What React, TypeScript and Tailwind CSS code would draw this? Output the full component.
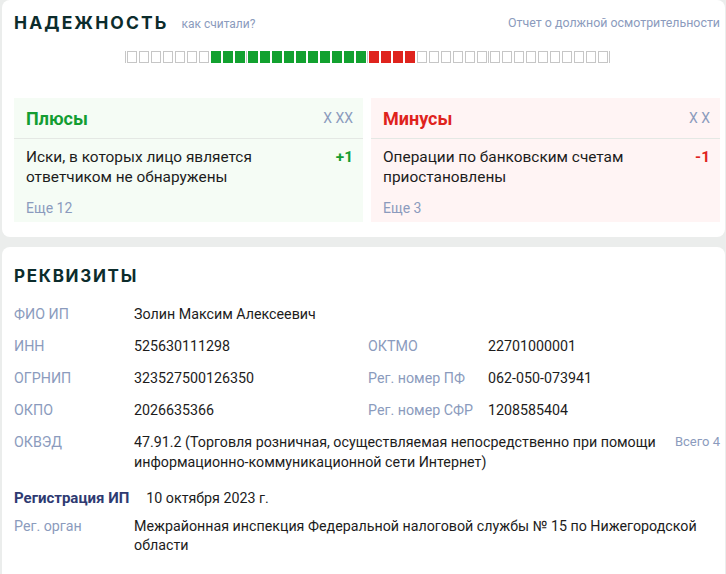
import React from 'react';

type Cell = 'empty' | 'green' | 'red';

const groups: Cell[][] = [
  [...Array(7).fill('empty'), ...Array(3).fill('green')],
  Array(10).fill('green'),
  [...Array(4).fill('red'), ...Array(6).fill('empty')],
  Array(10).fill('empty'),
];

const Divider = () => <div className="w-px h-[12px] bg-[#c6c6c6]" />;

const Square = ({ kind }: { kind: Cell }) => {
  if (kind === 'green') return <div className="w-[10px] h-[12px] bg-[#12a12f]" />;
  if (kind === 'red') return <div className="w-[10px] h-[12px] bg-[#df231d]" />;
  return <div className="w-[10px] h-[12px] border border-[#c6c6c6] box-border" />;
};

const Scale = () => (
  <div className="flex justify-center items-center">
    <Divider />
    {groups.map((g, i) => (
      <React.Fragment key={i}>
        <div className="flex gap-[2px] px-px">
          {g.map((c, j) => (
            <Square key={j} kind={c} />
          ))}
        </div>
        <Divider />
      </React.Fragment>
    ))}
  </div>
);

interface FactorBoxProps {
  title: string;
  counter: string;
  text: string;
  score: string;
  more: string;
  tone: 'plus' | 'minus';
}

const FactorBox: React.FC<FactorBoxProps> = ({ title, counter, text, score, more, tone }) => {
  const plus = tone === 'plus';
  return (
    <div className={`${plus ? 'bg-[#f5fcf5]' : 'bg-[#fff4f4]'} pl-3 pr-[10px] pb-[4px]`}>
      <div className="flex items-center justify-between h-[41px] border-b border-[#e4e8e4] -ml-3 pl-3 -mr-[10px] pr-[10px]">
        <span className={`text-[18px] font-bold ${plus ? 'text-[#139d32]' : 'text-[#df231d]'}`}>{title}</span>
        <span className="text-[14px] text-[#8b9bbd]">{counter}</span>
      </div>
      <div className="flex justify-between pt-[8px] text-[15.4px] leading-[20px] text-[#1c1c1c]">
        <p className="w-[260px]">{text}</p>
        <span className={`font-bold ${plus ? 'text-[#139d32]' : 'text-[#df231d]'}`}>{score}</span>
      </div>
      <div className="mt-[11px] text-[14px] leading-[20px] text-[#8b9bbd]">{more}</div>
    </div>
  );
};

const Label = ({ children }: { children: React.ReactNode }) => (
  <div className="text-[#8b9bbd]">{children}</div>
);

export default function App() {
  return (
    <div className="min-h-screen bg-[#ebedec] pl-[2px] pr-[1px] font-['Roboto',sans-serif]">
      {/* Надежность */}
      <div className="bg-white rounded-lg pl-3 pr-[5px] pt-[11px] pb-[15px]">
        <div className="flex items-center h-[24px]">
          <h2 className="font-['Inter',sans-serif] text-[17.5px] font-bold tracking-[0.12em] text-[#0c2c2c]">НАДЕЖНОСТЬ</h2>
          <span className="ml-[13px] mt-[1px] text-[12px] text-[#8b9bbd]">как считали?</span>
          <span className="ml-auto mt-[1px] text-[12.4px] text-[#8b9bbd]">Отчет о должной осмотрительности</span>
        </div>
        <div className="mt-[16px]">
          <Scale />
        </div>
        <div className="grid grid-cols-2 gap-2 mt-[35px]">
          <FactorBox
            tone="plus"
            title="Плюсы"
            counter="X XX"
            text="Иски, в которых лицо является ответчиком не обнаружены"
            score="+1"
            more="Еще 12"
          />
          <FactorBox
            tone="minus"
            title="Минусы"
            counter="X X"
            text="Операции по банковским счетам приостановлены"
            score="-1"
            more="Еще 3"
          />
        </div>
      </div>

      {/* Реквизиты */}
      <div className="mt-[10px] bg-white rounded-t-lg pl-3 pr-[5px] pt-[17px] pb-[20px] text-[14.25px] leading-[20px] text-[#1c1c1c]">
        <h2 className="font-['Inter',sans-serif] text-[17px] leading-[24px] font-bold tracking-[0.1em] text-[#0c2c2c]">РЕКВИЗИТЫ</h2>
        <div className="mt-[16px] grid grid-cols-[120px_234px_120px_1fr] gap-y-[12px]">
          <Label>ФИО ИП</Label>
          <div className="col-span-3">Золин Максим Алексеевич</div>

          <Label>ИНН</Label>
          <div>525630111298</div>
          <Label>ОКТМО</Label>
          <div>22701000001</div>

          <Label>ОГРНИП</Label>
          <div>323527500126350</div>
          <Label>Рег. номер ПФ</Label>
          <div>062-050-073941</div>

          <Label>ОКПО</Label>
          <div>2026635366</div>
          <Label>Рег. номер СФР</Label>
          <div>1208585404</div>

          <Label>ОКВЭД</Label>
          <div className="col-span-3 flex justify-between gap-4">
            <p className="max-w-[540px]">
              47.91.2 (Торговля розничная, осуществляемая непосредственно при помощи информационно-коммуникационной сети Интернет)
            </p>
            <span className="text-[#8b9bbd] text-[13px] shrink-0">Всего 4</span>
          </div>
        </div>

        <div className="mt-[16px] flex gap-[17px]">
          <span className="text-[15px] font-bold text-[#2e3a72]">Регистрация ИП</span>
          <span>10 октября 2023 г.</span>
        </div>
        <div className="mt-[9px] grid grid-cols-[120px_1fr] leading-[19px]">
          <Label>Рег. орган</Label>
          <p className="max-w-[580px]">Межрайонная инспекция Федеральной налоговой службы № 15 по Нижегородской области</p>
        </div>
      </div>
    </div>
  );
}
